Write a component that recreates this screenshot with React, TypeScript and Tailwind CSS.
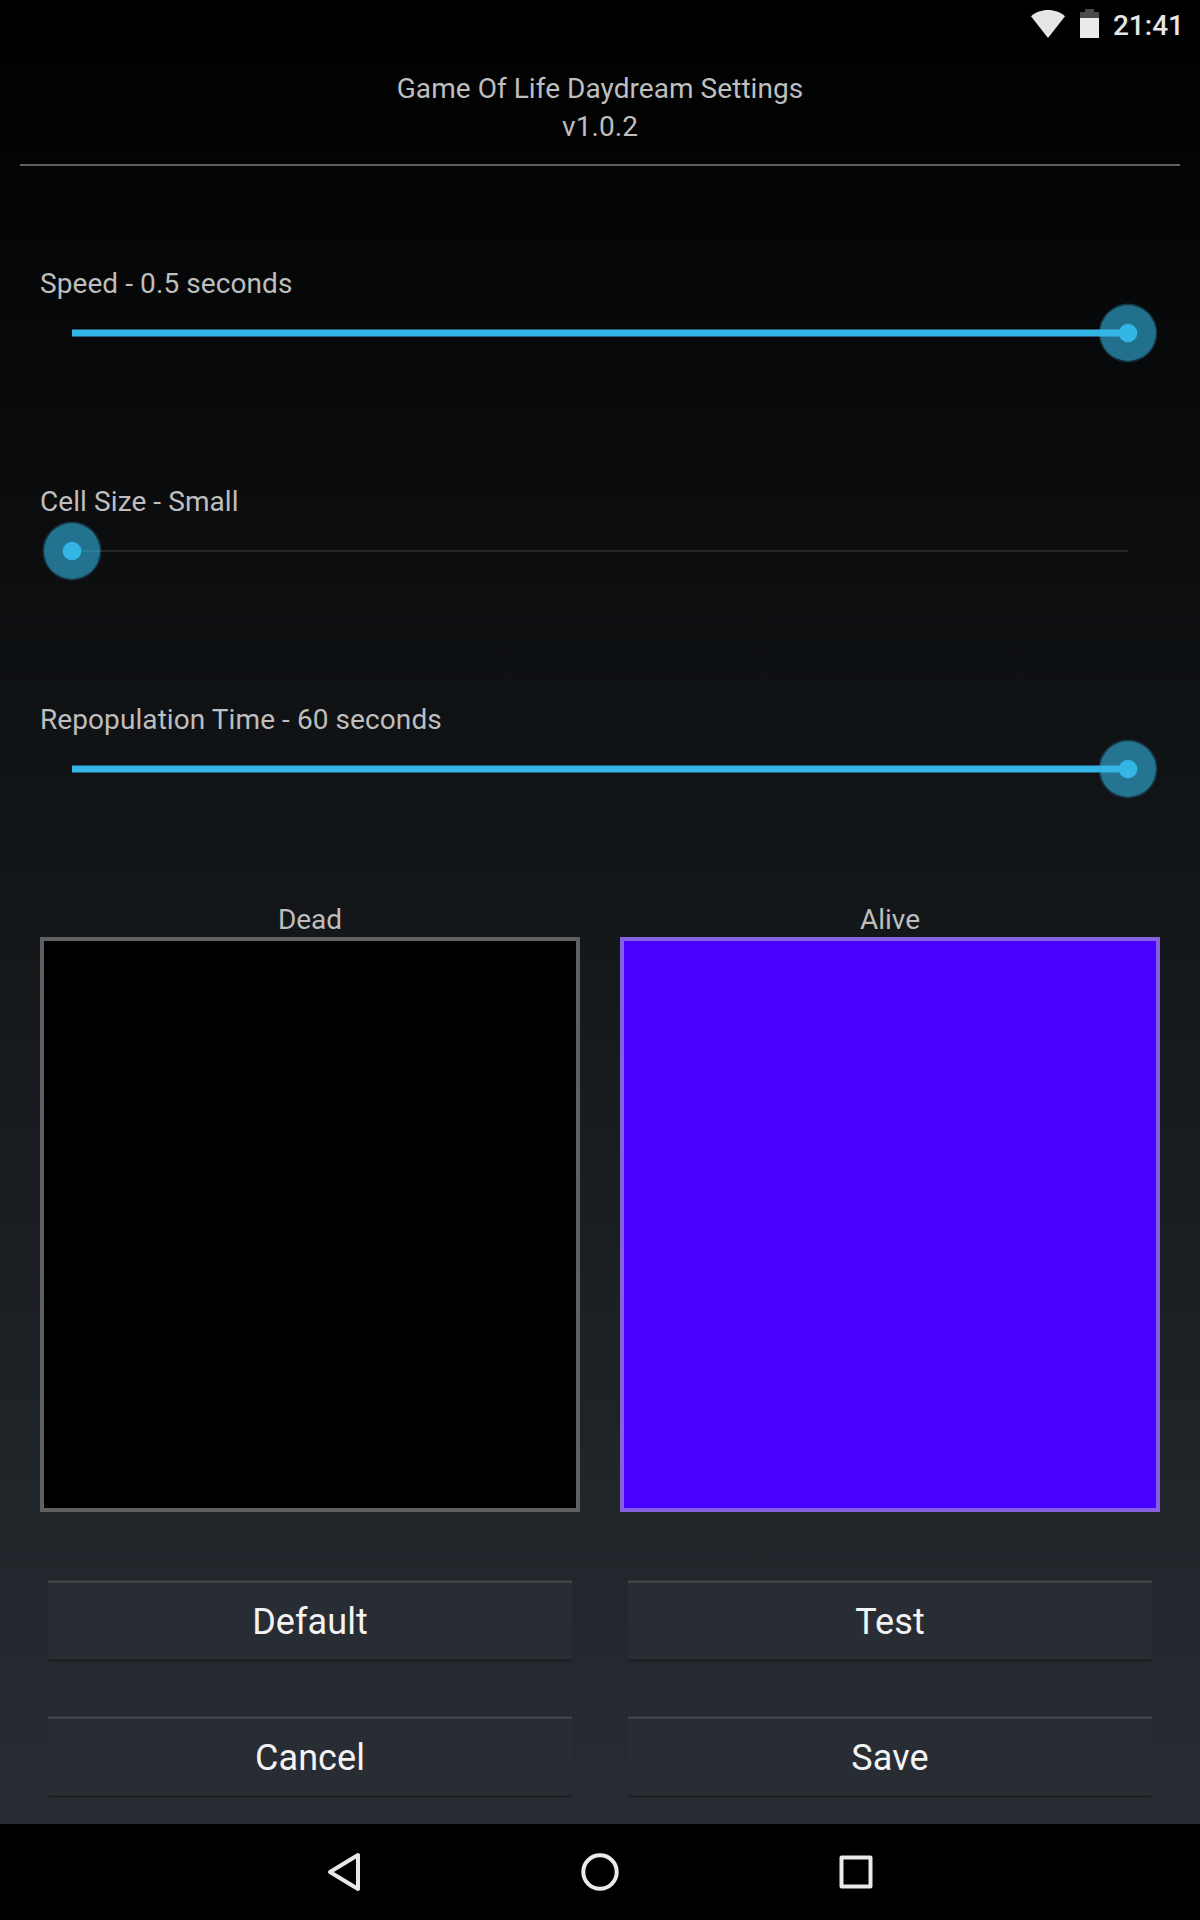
function StatusBar() {
  return (
    <header className="flex h-[50px] items-start justify-end pr-4 text-[#e6e6e6]">
      <svg className="mt-2.5 h-7 w-[34px]" viewBox="0 0 34 28" fill="#e6e6e6">
        <path d="M17 28 0 6.300C4.500 2.200 10.500 0 17 0S29.500 2.200 34 6.300Z" />
      </svg>
      <svg className="ml-[15px] mt-[9px] h-[29px] w-[19px]" viewBox="0 0 19 29">
        <path d="M5 0H14V3H19V9H0V3H5Z" fill="#4a4a4a" />
        <path d="M0 9H19V29H0Z" fill="#ebebeb" />
      </svg>
      <span className="ml-3.5 mt-2.5 text-[28px] leading-8 font-medium">21:41</span>
    </header>
  );
}

function Thumb() {
  return (
    <svg className="size-[60px]" viewBox="0 0 60 60">
      <circle cx="30" cy="30" r="28.700" fill="none" stroke="#33b5e5" strokeOpacity="0.25" strokeWidth="1.400" />
      <circle cx="30" cy="30" r="28" fill="#33b5e5" fillOpacity="0.6" />
      <circle cx="30" cy="30" r="9.300" fill="#33b5e5" />
    </svg>
  );
}

function Slider({ label, full }: { label: string; full: boolean }) {
  return (
    <section className="h-[218px]">
      <p className="h-8 text-[28px] leading-8 tracking-[0.08px]">{label}</p>
      <div className="mx-8 mt-1 grid h-[58px] items-center">
        <div
          className={
            full
              ? "col-start-1 row-start-1 h-2 border-y border-[#23627d] bg-[#33b5e5]"
              : "col-start-1 row-start-1 h-0.5 bg-[#242628]"
          }
        />
        <div
          className={
            full
              ? "col-start-1 row-start-1 -my-px -mr-[30px] justify-self-end"
              : "col-start-1 row-start-1 -my-px -ml-[30px] justify-self-start"
          }
        >
          <Thumb />
        </div>
      </div>
    </section>
  );
}

function Swatch({ label, box }: { label: string; box: string }) {
  return (
    <div className="flex-1 text-center">
      <p className="text-[28px] leading-8">{label}</p>
      <div className={box} />
    </div>
  );
}

function Button({ label }: { label: string }) {
  return (
    <button className="flex h-[82px] items-center justify-center rounded-[2px] bg-[#282d33] pt-0.5 text-[36px] leading-[42px] tracking-[0.08px] text-[#f3f3f3] shadow-[inset_0_1px_#303538,inset_0_2px_#484c4f,inset_0_3px_#363b3f,inset_0_-1px_#202427,inset_0_-2px_#1b1e21,inset_0_-3px_#24282b]">
      {label}
    </button>
  );
}

function NavBar() {
  return (
    <nav className="flex h-24 items-center justify-center gap-[216px] bg-black">
      <svg width="40" height="40" viewBox="0 0 40 40" fill="none" stroke="#e8e8e8" strokeWidth="4" strokeLinejoin="round">
        <path d="M34 3V37L6 20Z" />
      </svg>
      <svg width="40" height="40" viewBox="0 0 40 40" fill="none" stroke="#ebebeb" strokeWidth="4">
        <circle cx="20" cy="20" r="16.700" />
      </svg>
      <svg width="40" height="40" viewBox="0 0 40 40" fill="none" stroke="#ebebeb" strokeWidth="4" strokeLinejoin="round">
        <path d="M5.500 5.500H34.500V34.500H5.500Z" />
      </svg>
    </nav>
  );
}

export default function App() {
  return (
    <div className="flex h-[1920px] w-[1200px] flex-col overflow-hidden bg-black font-[Roboto,sans-serif] text-[#bebebe]">
      <main className="h-[1824px] bg-linear-to-b/srgb from-black to-[#272d33]">
        <StatusBar />
        <div className="mx-5 h-[116px] border-b-2 border-[#606060] pt-5 text-center text-[28px] leading-[38px] tracking-[0.05px]">
          <h1>Game Of Life Daydream Settings</h1>
          <p>v1.0.2</p>
        </div>
        <div className="px-10 pt-[102px]">
          <Slider label="Speed - 0.5 seconds" full />
          <Slider label="Cell Size - Small" full={false} />
          <Slider label="Repopulation Time - 60 seconds" full />
        </div>
        <div className="-mt-[18px] flex gap-10 px-10">
          <Swatch label="Dead" box="mt-px h-[575px] border-4 border-[#606060] bg-black" />
          <Swatch label="Alive" box="mt-px h-[575px] border-4 border-[#8660e0] bg-[#4800ff]" />
        </div>
        <div className="mt-[68px] grid grid-cols-2 gap-x-14 gap-y-[54px] px-12">
          <Button label="Default" />
          <Button label="Test" />
          <Button label="Cancel" />
          <Button label="Save" />
        </div>
      </main>
      <NavBar />
    </div>
  );
}
